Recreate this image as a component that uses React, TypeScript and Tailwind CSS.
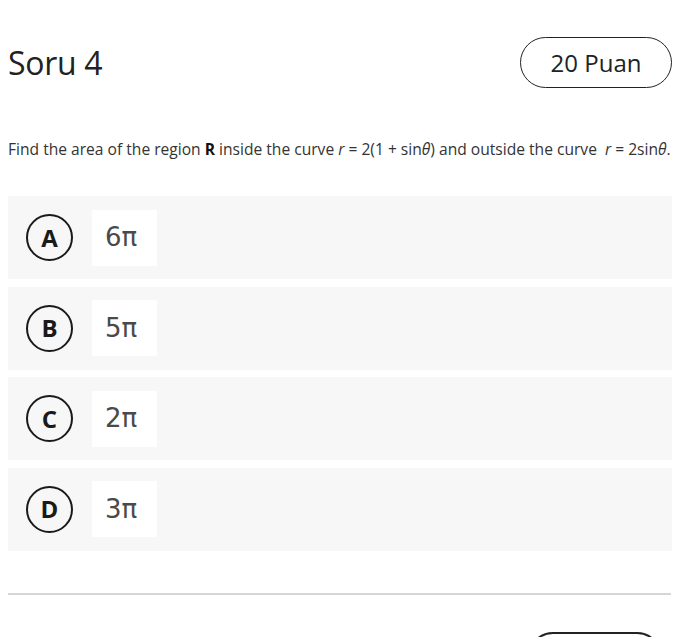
import React from "react";

const options = [
  { key: "A", value: "6π" },
  { key: "B", value: "5π" },
  { key: "C", value: "2π" },
  { key: "D", value: "3π" },
];

export default function App() {
  return (
    <div className="w-[700px] h-[637px] overflow-hidden bg-white px-2 font-['Open_Sans',sans-serif] text-[#222]">
      {/* header */}
      <div className="flex items-center justify-between pt-[37px] pr-5">
        <h1 className="text-[32px] leading-none tracking-[-0.3px]">Soru 4</h1>
        <div className="flex h-[51px] w-[152px] items-center justify-center rounded-full border-[1.5px] border-[#222] text-[24px]">
          20 Puan
        </div>
      </div>

      {/* question */}
      <p className="mt-[51px] whitespace-nowrap text-[15.6px] leading-5 text-[#333]">
        Find the area of the region <b className="font-bold text-[#111]">R</b> inside the curve{" "}
        <i>r</i> = 2(1 + sin<i>θ</i>) and outside the curve&nbsp; <i>r</i> = 2sin<i>θ</i>.
      </p>

      {/* options */}
      <div className="mt-[37px] flex w-[664px] flex-col gap-[7.5px]">
        {options.map((o) => (
          <div key={o.key} className="flex h-[83px] items-center bg-[#f7f7f7] pl-[18px]">
            <div className="flex h-[47px] w-[47px] items-center justify-center rounded-full border-[2.5px] border-[#1a1a1a] text-[24px] font-bold leading-none text-[#1a1a1a]">
              {o.key}
            </div>
            <div className="ml-[19px] flex h-[56px] w-[65px] items-center bg-white pl-[13px] font-['DejaVu_Sans',sans-serif] text-[26px] text-[#4a4a4a]">
              {o.value}
            </div>
          </div>
        ))}
      </div>

      {/* divider */}
      <div className="mt-[42px] h-[2px] w-[663px] bg-[#d6d6d6]" />

      {/* next button (cut off) */}
      <div className="mt-[37px] flex justify-end pr-[30px]">
        <div className="h-[50px] w-[134px] rounded-full border-2 border-[#222]" />
      </div>
    </div>
  );
}
